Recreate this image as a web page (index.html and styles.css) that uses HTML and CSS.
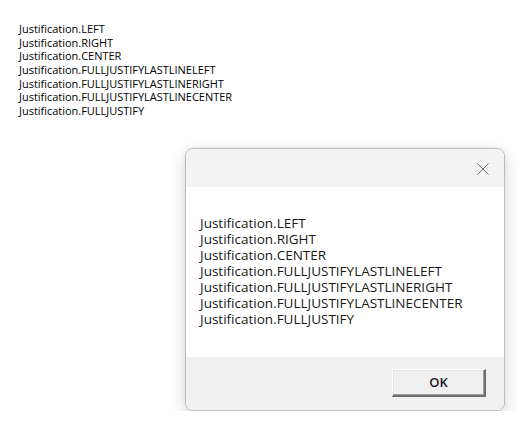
FILE: index.html
```html
<!DOCTYPE html>
<html>
<head>
<meta charset="utf-8">
<link rel="stylesheet" href="styles.css">
</head>
<body>
<div class="console">
  <div>Justification.LEFT</div>
  <div>Justification.RIGHT</div>
  <div>Justification.CENTER</div>
  <div>Justification.FULLJUSTIFYLASTLINELEFT</div>
  <div>Justification.FULLJUSTIFYLASTLINERIGHT</div>
  <div>Justification.FULLJUSTIFYLASTLINECENTER</div>
  <div>Justification.FULLJUSTIFY</div>
</div>
<div class="dialog">
  <div class="titlebar">
    <svg class="close" width="12" height="12" viewBox="0 0 12 12"><path d="M0.5 0.5 L11.5 11.5 M11.5 0.5 L0.5 11.5" stroke="#6b6b6b" stroke-width="1" fill="none"/></svg>
  </div>
  <div class="body">
    <div>Justification.LEFT</div>
    <div>Justification.RIGHT</div>
    <div>Justification.CENTER</div>
    <div>Justification.FULLJUSTIFYLASTLINELEFT</div>
    <div>Justification.FULLJUSTIFYLASTLINERIGHT</div>
    <div>Justification.FULLJUSTIFYLASTLINECENTER</div>
    <div>Justification.FULLJUSTIFY</div>
  </div>
  <div class="footer">
    <button class="ok">OK</button>
  </div>
</div>
</body>
</html>
```
FILE: styles.css
```css
html, body {
  margin: 0;
  padding: 0;
  background: #ffffff;
}
body {
  font-family: "Open Sans", sans-serif;
  color: #000;
}
.console {
  font-size: 11px;
  line-height: 13.67px;
  padding: 22px 0 0 19px;
  letter-spacing: -0.02px;
}
.dialog {
  margin: 30px 0 0 185px;
  width: 318px;
  height: 261px;
  border: 1px solid #bdbdbd;
  border-radius: 8px;
  overflow: hidden;
  display: flex;
  flex-direction: column;
  box-shadow: 0 6px 18px rgba(0, 0, 0, 0.16), 0 0 4px rgba(0,0,0,0.06);
  background: #fff;
}
.titlebar {
  height: 38px;
  background: #f3f3f3;
  display: flex;
  justify-content: flex-end;
  align-items: center;
  padding-right: 15px;
}
.close {
  display: block;
  margin-top: 2px;
}
.body {
  flex: 1;
  background: #fff;
  padding: 28px 0 0 14px;
  font-size: 13.5px;
  line-height: 16.1px;
  color: #1a1a1a;
}
.footer {
  height: 53px;
  background: #f0f0f0;
  display: flex;
  justify-content: flex-end;
  align-items: flex-start;
  padding: 12px 18px 0 0;
  box-sizing: border-box;
}
.ok {
  width: 94px;
  height: 28px;
  margin: 0;
  padding: 0;
  background: #f0f0f0;
  border-style: solid;
  border-width: 1px 2px 2px 1px;
  border-color: #ffffff #6d6d6d #6d6d6d #ffffff;
  box-shadow: inset -1px -1px 0 #a0a0a0, inset 1px 1px 0 #e3e3e3;
  font-family: "Open Sans", sans-serif;
  font-size: 13px;
  font-weight: 600;
  color: #1a1a1a;
  line-height: 24px;
}
```
